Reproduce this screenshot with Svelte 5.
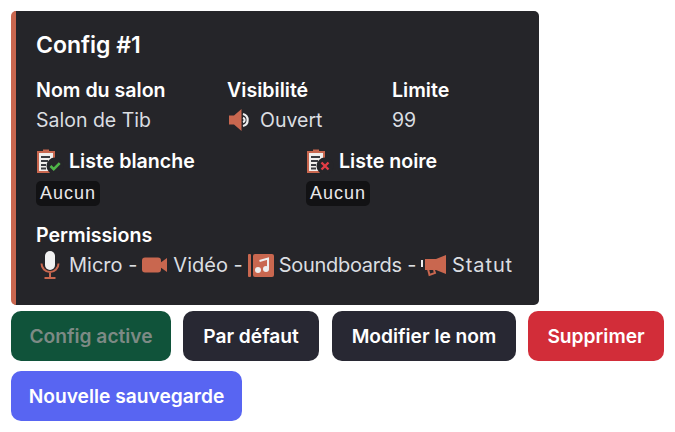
<script>
  const copper = '#c9674f';
  const fields = [
    { name: 'Nom du salon', value: 'Salon de Tib' },
    { name: 'Visibilité', value: 'Ouvert', icon: 'speaker' },
    { name: 'Limite', value: '99' }
  ];
  const lists = [
    { name: 'Liste blanche', mark: 'ok' },
    { name: 'Liste noire', mark: 'no' }
  ];
  const row1 = [
    { label: 'Config active', kind: 'active', w: 160 },
    { label: 'Par défaut', kind: 'dark', w: 136 },
    { label: 'Modifier le nom', kind: 'dark rename', w: 184 },
    { label: 'Supprimer', kind: 'red', w: 136 }
  ];
</script>

<div class="page">
  <section class="embed">
    <h2>Config #1</h2>

    <div class="fields">
      {#each fields as f}
        <div class="field">
          <div class="name">{f.name}</div>
          <div class="value">
            {#if f.icon}
              <svg class="ico speaker" width="25" height="26" viewBox="0 0 25 26">
                <path d="M1 8.500h5L13.500 2v22L6 17.500H1z" fill={copper} />
                <path d="M15 7a6.200 6.200 0 0 1 0 12M15 10.800a2.300 2.300 0 0 1 0 4.400" fill="none" stroke="#eee" stroke-width="2.200" />
              </svg>
            {/if}
            {f.value}
          </div>
        </div>
      {/each}
    </div>

    <div class="lists">
      {#each lists as l}
        <div class="list">
          <div class="name with-icon">
            <svg class="ico" width="28" height="26" viewBox="0 0 28 26">
              <path d="M1 3h18v22H1z" fill={copper} />
              <path d="M3 5h14v18H3z" fill="#f1eeec" />
              <path d="M7 1.500h6V5H7z" fill={copper} />
              <path d="M5 9h9M5 13h7M5 17h5M5 20.500h5" stroke="#3a3a3f" stroke-width="1.800" />
              <circle cx="19" cy="18" r="8.500" fill="#252529" />
              {#if l.mark === 'ok'}
                <path d="M14.500 18l3.200 3.200 6-6" fill="none" stroke="#4fb548" stroke-width="2.600" />
              {:else}
                <path d="M15.500 14.500l7 7M22.500 14.500l-7 7" fill="none" stroke="#e23d45" stroke-width="2.400" />
              {/if}
            </svg>
            {l.name}
          </div>
          <code class="chip">Aucun</code>
        </div>
      {/each}
    </div>

    <div class="perms">
      <div class="name">Permissions</div>
      <div class="value perm-line">
        <svg class="ico mic" width="28" height="28" viewBox="0 0 28 28">
          <rect x="9" y="0" width="10" height="19" rx="5" fill="#f1f1f1" />
          <path d="M5.500 12.500a8.500 8.500 0 0 0 17 0M14 21v5.500M8.500 27h11" fill="none" stroke={copper} stroke-width="2" />
        </svg>
        <span>Micro -</span>
        <svg class="ico" width="26" height="16" viewBox="0 0 26 16">
          <rect x="0" y="0.500" width="19" height="15" rx="3" fill={copper} />
          <path d="M18 6l7-5v14l-7-5z" fill={copper} />
        </svg>
        <span>Vidéo -</span>
        <svg class="ico" width="26" height="23" viewBox="0 0 26 23">
          <rect x="0" y="0" width="3" height="23" rx="1" fill={copper} />
          <rect x="5" y="0" width="21" height="23" rx="2" fill={copper} />
          <path d="M11.500 7l8.500-2.500v10" fill="none" stroke="#eee" stroke-width="2" />
          <circle cx="10" cy="16" r="3" fill="#eee" />
          <circle cx="18" cy="15" r="3" fill="#eee" />
        </svg>
        <span class="sound">Soundboards -</span>
        <svg class="ico" width="26" height="23" viewBox="0 0 26 23">
          <rect x="0" y="6" width="2" height="7" fill="#eee" />
          <path d="M4 5h11l10-4v19l-10-4H4z" fill={copper} />
          <path d="M7 15l1.500 6 5.500-2-1-3" fill="none" stroke={copper} stroke-width="2" />
        </svg>
        <span class="statut">Statut</span>
      </div>
    </div>
  </section>

  <div class="buttons">
    {#each row1 as b}
      <button class="btn {b.kind}" style="width: {b.w}px">{b.label}</button>
    {/each}
    <button class="btn blue" style="width: 231px">Nouvelle sauvegarde</button>
  </div>
</div>

<style>
  :global(body) {
    margin: 0;
    background: #fff;
  }

  .page {
    width: 675px;
    height: 432px;
    box-sizing: border-box;
    padding: 11px 0 0 11px;
    font-family: Inter, "Noto Sans", sans-serif;
    overflow: hidden;
  }

  .embed {
    width: 528px;
    height: 294px;
    box-sizing: border-box;
    background: #252529;
    border-left: 5px solid #c9674f;
    border-radius: 5px;
    padding: 20px 20px 0 20px;
    color: #f0f0f2;
  }

  h2 {
    margin: 0;
    font-size: 23px;
    line-height: 28px;
    font-weight: 600;
    color: #fff;
  }

  .fields {
    display: grid;
    grid-template-columns: 191px 165px 1fr;
    margin-top: 18px;
  }

  .lists {
    display: grid;
    grid-template-columns: 270px 1fr;
    margin-top: 14px;
  }

  .perms {
    margin-top: 16px;
  }

  .name {
    font-size: 19.6px;
    line-height: 26px;
    font-weight: 600;
    color: #fff;
  }

  .value {
    font-size: 19.5px;
    line-height: 28px;
    margin-top: 3px;
    color: #dbdee1;
    display: flex;
    align-items: center;
    gap: 7px;
  }

  .speaker {
    margin-left: 1px;
  }

  .with-icon {
    display: flex;
    align-items: center;
    gap: 5px;
  }

  .ico {
    flex: none;
  }

  .chip {
    display: block;
    width: fit-content;
    margin-top: 7px;
    padding: 0 4px;
    background: #121214;
    border-radius: 5px;
    font-family: "Liberation Sans", sans-serif;
    font-size: 18px;
    line-height: 25px;
    letter-spacing: 1px;
    color: #e8e8ea;
  }

  .perm-line {
    font-size: 20px;
    gap: 5px;
    margin-top: 3px;
  }

  .sound {
    letter-spacing: -0.3px;
  }

  .statut {
    letter-spacing: 0.9px;
  }

  .buttons {
    display: flex;
    flex-wrap: wrap;
    gap: 10px 12px;
    margin-top: 6px;
  }

  .btn {
    height: 50px;
    border: none;
    border-radius: 10px;
    padding: 0;
    font: 600 19.2px Inter, "Noto Sans", sans-serif;
    color: #fff;
  }

  .rename {
    margin-left: 1px;
  }

  .active {
    background: #10533a;
    color: #7d8a85;
  }

  .dark {
    background: #282833;
  }

  .red {
    background: #d22d39;
  }

  .blue {
    background: #5865f2;
  }
</style>
